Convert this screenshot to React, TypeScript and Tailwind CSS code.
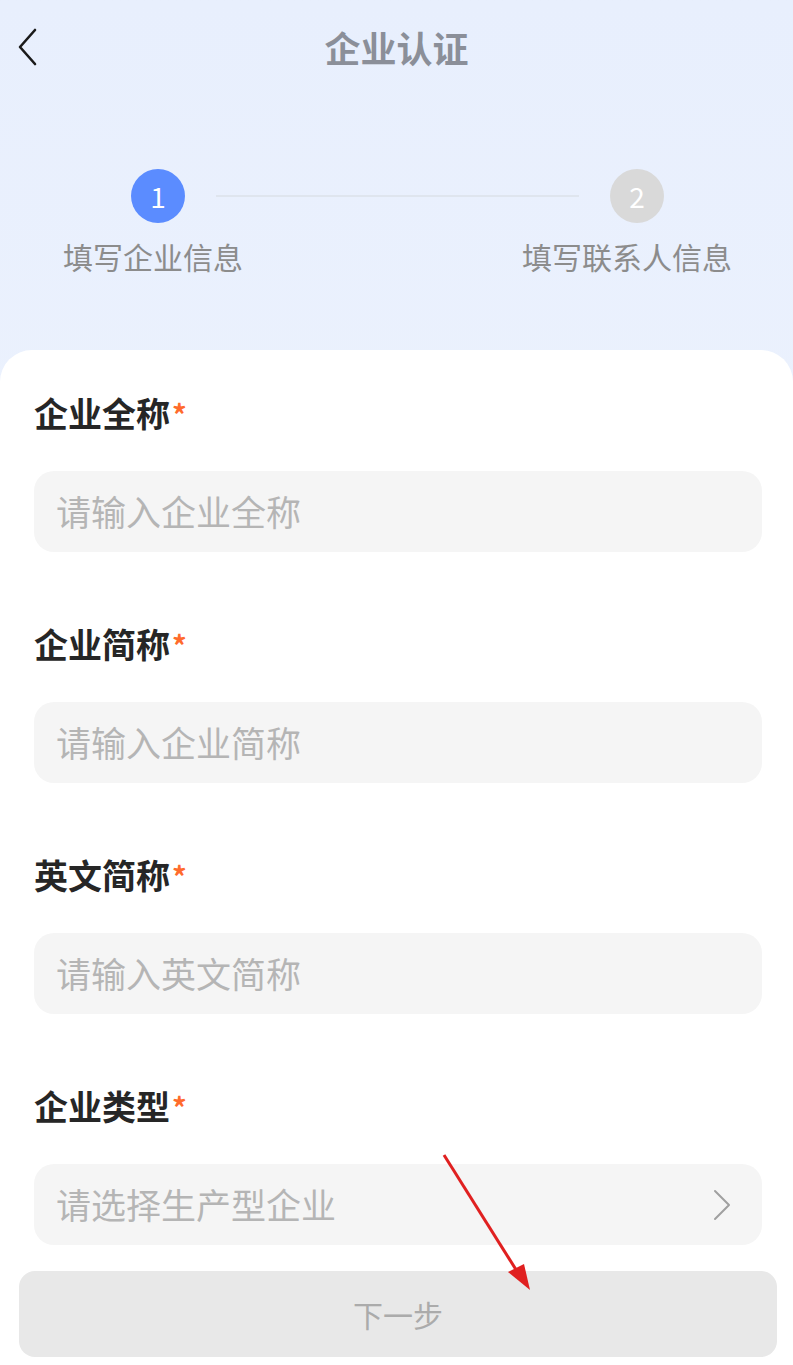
const fields = [
  { label: "企业全称", placeholder: "请输入企业全称" },
  { label: "企业简称", placeholder: "请输入企业简称" },
  { label: "英文简称", placeholder: "请输入英文简称" },
  { label: "企业类型", placeholder: "请选择生产型企业", select: true },
];

export default function App() {
  return (
    <div
      className="relative flex h-[1365px] w-full flex-col overflow-hidden bg-gradient-to-b from-[#e8effd] to-[#f1f6fe]"
      style={{ fontFamily: '"Noto Sans CJK SC", "Noto Sans", sans-serif' }}
    >
      {/* nav bar */}
      <div className="grid h-[94px] shrink-0 grid-cols-[80px_1fr_80px] items-center">
        <button className="pl-[16px]">
          <svg width="22" height="38" viewBox="0 0 22 38" fill="none">
            <path d="M19 2 L4 19 L19 36" stroke="#1a1a1a" strokeWidth="2.6" strokeLinecap="round" strokeLinejoin="round" />
          </svg>
        </button>
        <h1 className="text-center text-[36px] font-bold text-[#8b8f99]">企业认证</h1>
        <div />
      </div>

      {/* steps */}
      <div className="mt-[75px] shrink-0">
        <div className="flex items-center pl-[131px] pr-[129px]">
          <div className="flex h-[54px] w-[54px] items-center justify-center rounded-full bg-[#5b8cff] text-[28px] text-white">
            1
          </div>
          <div className="mx-[31px] h-[2px] flex-1 bg-[#dfe5ee]" />
          <div className="flex h-[54px] w-[54px] items-center justify-center rounded-full bg-[#d9d9d9] text-[28px] text-white">
            2
          </div>
        </div>
        <div className="mt-[13px] flex justify-between pl-[63px] pr-[61px] text-[30px] leading-[40px] text-[#8c8c8c]">
          <span>填写企业信息</span>
          <span>填写联系人信息</span>
        </div>
      </div>

      {/* form card */}
      <div className="mt-[74px] flex-1 overflow-hidden rounded-t-[32px] bg-white pt-[43px] pl-[34px] pr-[31px]">
        {fields.map((f) => (
          <div key={f.label} className="mb-[72px]">
            <div className="flex items-start text-[34px] leading-[40px] font-bold text-[#262626]">
              {f.label}
              <span className="ml-[2px] text-[29px] text-[#ff6b2c]">*</span>
            </div>
            <div className="mt-[38px] flex h-[81px] items-center justify-between rounded-[20px] bg-[#f5f5f5] pl-[22px] pr-[30px]">
              <span className="text-[35px] text-[#b5b5b5]">{f.placeholder}</span>
              {f.select && (
                <svg width="20" height="32" viewBox="0 0 20 32" fill="none">
                  <path d="M3 2 L17 16 L3 30" stroke="#a0a0a0" strokeWidth="2" strokeLinecap="round" strokeLinejoin="round" />
                </svg>
              )}
            </div>
          </div>
        ))}
      </div>

      {/* bottom bar */}
      <div className="absolute inset-x-0 bottom-0 h-[120px] bg-white pt-[26px] pl-[19px] pr-[16px]">
        <button className="flex h-[86px] w-full items-center justify-center rounded-[16px] bg-[#e8e8e8] text-[30px] text-[#ababab]">
          下一步
        </button>
      </div>

      {/* annotation arrow */}
      <svg className="pointer-events-none absolute left-0 top-0" width="793" height="1365">
        <line x1="444" y1="1155" x2="520" y2="1276" stroke="#e02020" strokeWidth="3" />
        <polygon points="530,1290 508,1272 524,1264" fill="#e02020" />
      </svg>
    </div>
  );
}
